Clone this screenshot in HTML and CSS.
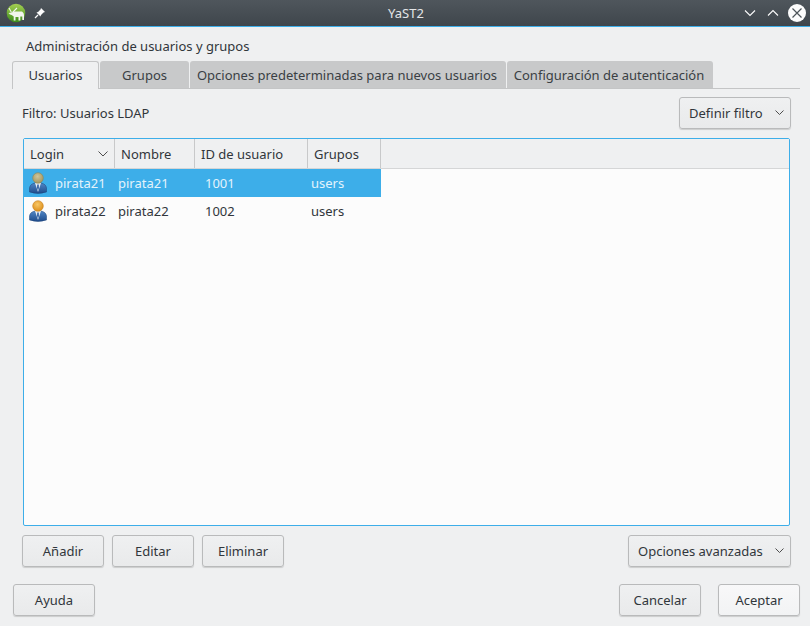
FILE: index.html
```html
<!DOCTYPE html>
<html lang="es">
<head>
    <meta charset="UTF-8">
    <title>YaST2</title>
    <link rel="stylesheet" href="styles.css">
</head>
<body>

    <svg class="svg-defs" width="0" height="0">
        <defs>
            <linearGradient id="appGreen" x1="0" y1="0" x2="0" y2="1">
                <stop offset="0" stop-color="#a6d052"/>
                <stop offset="1" stop-color="#3c8c1c"/>
            </linearGradient>
            <linearGradient id="shirt" x1="0" y1="0" x2="0" y2="1">
                <stop offset="0" stop-color="#4f86c6"/>
                <stop offset="1" stop-color="#1f4c8c"/>
            </linearGradient>
            <radialGradient id="headGold" cx="0.45" cy="0.35" r="0.65">
                <stop offset="0" stop-color="#f8c766"/>
                <stop offset="1" stop-color="#dd8f1c"/>
            </radialGradient>
            <radialGradient id="headPale" cx="0.45" cy="0.35" r="0.65">
                <stop offset="0" stop-color="#cfc59c"/>
                <stop offset="1" stop-color="#a2965f"/>
            </radialGradient>
            <g id="userBody">
                <path d="M0.500 20 L0.500 16 Q1 12 6 11 L12 11 Q17 12 17.500 16 L17.500 20 Q9 23 0.500 20 Z" fill="url(#shirt)" stroke="#1c4278" stroke-width="0.500"/>
                <path d="M6 11 L9 20 L12 11 Z" fill="#e6edf3"/>
                <path d="M8.300 12.500 L9.700 12.500 L9.900 16 L9 18.500 L8.100 16 Z" fill="#2a5a9e"/>
            </g>
        </defs>
    </svg>

    <div class="titlebar">
        <div class="title-left">
            <svg class="app-icon" width="20" height="20" viewBox="0 0 20 20">
                <circle cx="10" cy="10" r="9.300" fill="url(#appGreen)"/>
                <path d="M2.500 10 L6 9.500 L8 8.500 L16 8.500 Q18 9.500 18 12 L18 17 L16.300 17 L16.300 13.500 L14.300 13.500 L14.300 17.500 L12.500 17.500 L12.500 14 L9.500 14 L9.500 17.500 L7.700 17.500 L7.700 13.500 Q5.500 11.500 4 11.500 Z" fill="#f2f5ee"/>
                <path d="M5.500 9.500 L3 5 M6.500 9.500 L11 5" stroke="#f2f5ee" stroke-width="1.100" fill="none"/>
            </svg>
            <svg class="pin-icon" width="12" height="12" viewBox="0 0 12 12">
                <path d="M7 1 L11 5 L9.500 5.500 L7 8 L6.500 9.500 L2.500 5.500 L4 5 L6.500 2.500 Z" fill="#fcfcfc"/>
                <path d="M4 8 L1 11" stroke="#fcfcfc" stroke-width="1.200"/>
            </svg>
        </div>
        <div class="title-text">YaST2</div>
        <div class="title-buttons">
            <svg width="12" height="8" viewBox="0 0 12 8"><path d="M1 1.500 L6 6.500 L11 1.500" fill="none" stroke="#fcfcfc" stroke-width="1.100"/></svg>
            <svg width="12" height="8" viewBox="0 0 12 8"><path d="M1 6.500 L6 1.500 L11 6.500" fill="none" stroke="#fcfcfc" stroke-width="1.100"/></svg>
            <svg class="close-icon" width="18" height="18" viewBox="0 0 18 18">
                <circle cx="9" cy="9" r="9" fill="#fcfcfc"/>
                <path d="M4.500 4.500 L13.500 13.500 M13.500 4.500 L4.500 13.500" stroke="#4d5459" stroke-width="1.200"/>
            </svg>
        </div>
    </div>

    <div class="content">
        <h1 class="page-title">Administración de usuarios y grupos</h1>

        <div class="tabs">
            <div class="tab tab-active tab-users">Usuarios</div>
            <div class="tab tab-groups">Grupos</div>
            <div class="tab tab-defaults">Opciones predeterminadas para nuevos usuarios</div>
            <div class="tab tab-auth">Configuración de autenticación</div>
        </div>

        <div class="filter-row">
            <span>Filtro: Usuarios LDAP</span>
            <button class="btn btn-menu btn-filter">Definir filtro
                <svg width="9" height="6" viewBox="0 0 9 6"><path d="M0.500 0.500 L4.500 4.500 L8.500 0.500" fill="none" stroke="#4d4d4d"/></svg>
            </button>
        </div>

        <div class="list">
            <div class="list-head">
                <div class="cell col-login">Login
                    <svg width="10" height="6" viewBox="0 0 10 6"><path d="M0.500 0.500 L5 5 L9.500 0.500" fill="none" stroke="#4d4d4d"/></svg>
                </div>
                <div class="cell col-name">Nombre</div>
                <div class="cell col-id">ID de usuario</div>
                <div class="cell col-groups">Grupos</div>
            </div>

            <div class="row row-selected">
                <div class="cell col-login">
                    <svg class="user-icon" width="18" height="22" viewBox="0 0 18 22">
                        <use href="#userBody"/>
                        <circle cx="9" cy="6" r="5.300" fill="url(#headPale)" stroke="#8f8658" stroke-width="0.600"/>
                    </svg>
                    pirata21
                </div>
                <div class="cell col-name">pirata21</div>
                <div class="cell col-id">1001</div>
                <div class="cell col-groups">users</div>
            </div>

            <div class="row">
                <div class="cell col-login">
                    <svg class="user-icon" width="18" height="22" viewBox="0 0 18 22">
                        <use href="#userBody"/>
                        <circle cx="9" cy="6" r="5.300" fill="url(#headGold)" stroke="#c9821c" stroke-width="0.600"/>
                    </svg>
                    pirata22
                </div>
                <div class="cell col-name">pirata22</div>
                <div class="cell col-id">1002</div>
                <div class="cell col-groups">users</div>
            </div>
        </div>

        <div class="action-row">
            <button class="btn">Añadir</button>
            <button class="btn">Editar</button>
            <button class="btn">Eliminar</button>
            <button class="btn btn-menu btn-advanced">Opciones avanzadas
                <svg width="9" height="6" viewBox="0 0 9 6"><path d="M0.500 0.500 L4.500 4.500 L8.500 0.500" fill="none" stroke="#4d4d4d"/></svg>
            </button>
        </div>

        <div class="dialog-row">
            <button class="btn">Ayuda</button>
            <button class="btn btn-cancel">Cancelar</button>
            <button class="btn btn-default">Aceptar</button>
        </div>
    </div>

</body>
</html>
```

FILE: styles.css
```css
/* Base */
* {
    box-sizing: border-box;
}
html, body {
    margin: 0;
    height: 100%;
}
body {
    width: 810px;
    height: 626px;
    overflow: hidden;
    background-color: #eff0f1;
    color: #31363b;
    font-family: "Noto Sans", sans-serif;
    font-size: 13px;
    line-height: 18px;
}
.svg-defs {
    display: block;
    height: 0;
}

/* Window title */
.titlebar {
    display: flex;
    align-items: center;
    justify-content: space-between;
    height: 27px;
    padding: 0 4px 1px 6px;
    background: linear-gradient(#4f565c, #3f464c);
    border-bottom: 1px solid #3daee9;
    color: #e4e6e7;
}
.title-left {
    display: flex;
    align-items: center;
    gap: 8px;
    width: 200px;
}
.title-text {
    flex: 1;
    text-align: center;
}
.title-buttons {
    display: flex;
    align-items: center;
    justify-content: flex-end;
    gap: 11px;
    width: 200px;
}
.close-icon {
    margin-left: -2px;
}

/* Dialog */
.content {
    padding: 10px 10px 0 12px;
}
.page-title {
    margin: 0 0 6px 14px;
    font-size: 13px;
    font-weight: normal;
    line-height: 18px;
}

/* Tabs */
.tabs {
    display: flex;
    gap: 1px;
    height: 28px;
    border-bottom: 1px solid #c4c5c6;
}
.tab {
    height: 27px;
    line-height: 28px;
    text-align: center;
    background-color: #c8c9ca;
    color: #3a3f44;
    border-radius: 3px 3px 0 0;
}
.tab-active {
    height: 28px;
    background-color: #eff0f1;
    border: 1px solid #c4c5c6;
    border-bottom: none;
    line-height: 26px;
    color: #31363b;
}
.tab-users { width: 87px; }
.tab-groups { width: 89px; }
.tab-defaults {
    width: 316px;
    padding-right: 2px;
}
.tab-auth {
    width: 206px;
    padding-right: 2px;
}

/* Filter */
.filter-row {
    display: flex;
    align-items: center;
    justify-content: space-between;
    height: 32px;
    margin: 8px 9px 0 10px;
}

/* Buttons */
.btn {
    width: 82px;
    height: 32px;
    padding: 0;
    background: linear-gradient(#eff0f1, #e9eaeb);
    border: 1px solid #b9babb;
    border-radius: 3px;
    box-shadow: 0 1px 1px rgba(0, 0, 0, 0.15);
    color: #31363b;
    font: inherit;
}
.btn-menu {
    display: flex;
    align-items: center;
    justify-content: space-between;
    padding: 0 6px 0 9px;
}
.btn-filter { width: 112px; }
.btn-advanced {
    width: 163px;
    margin-left: auto;
}
.btn-cancel { margin-left: auto; }
.btn-default {
    background: linear-gradient(#f8f8f9, #f2f3f4);
}

/* User list */
.list {
    height: 388px;
    margin: 9px 10px 0 11px;
    background-color: #fcfcfc;
    border: 1px solid #3daee9;
    border-radius: 2px;
}
.list-head {
    display: flex;
    height: 30px;
    background-color: #eff0f1;
    border-bottom: 1px solid #d5d6d7;
}
.list-head .cell {
    height: 29px;
    padding-left: 6px;
    border-right: 1px solid #c8c9ca;
}
.row {
    display: flex;
    height: 28px;
    width: 357px;
}
.row-selected {
    background-color: #3daee9;
    color: #e3f3fc;
}
.cell {
    display: flex;
    align-items: center;
    flex: none;
}
.col-login { width: 91px; }
.col-name { width: 80px; }
.col-id { width: 113px; }
.col-groups { width: 73px; }
.list-head .col-login {
    justify-content: space-between;
    padding-right: 6px;
}
.row .col-login { padding-left: 5px; }
.row .col-name { padding-left: 3px; }
.row .col-id { padding-left: 10px; }
.row .col-groups { padding-left: 3px; }
.user-icon {
    margin-right: 8px;
}

/* Bottom buttons */
.action-row {
    display: flex;
    gap: 8px;
    margin: 9px 9px 0 10px;
}
.dialog-row {
    display: flex;
    gap: 17px;
    margin: 17px 0 0 1px;
}
```
